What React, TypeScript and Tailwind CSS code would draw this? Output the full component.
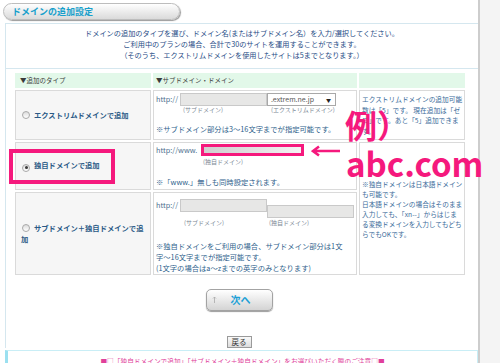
import React from "react";

const jp = "font-['Noto_Sans_CJK_JP','Noto_Sans',sans-serif]";

const Radio = ({ checked }: { checked?: boolean }) => (
  <span className="mr-[4px] inline-flex h-[8px] w-[8px] items-center justify-center rounded-full border border-[#a9a9a9] bg-gradient-to-b from-[#dcdcdc] to-white align-[-1px]">
    {checked && <span className="h-[3px] w-[3px] rounded-full bg-[#3a3a3a]" />}
  </span>
);

const Field = ({ w }: { w: string }) => (
  <span className={`block h-[13px] border border-[#c9c9c9] bg-[#e7e7e6] ${w}`} />
);

const App = () => {
  return (
    <div className={`flex h-[363px] w-[500px] overflow-hidden bg-white ${jp}`}>
      <div className="relative w-[478px]">
        {/* title tab */}
        <div className="ml-[3px] mt-[3px] flex h-[17px] w-[177px] items-center rounded-full border border-[#bdbdbd] bg-gradient-to-b from-white to-[#dadada] pl-[8px] shadow-[1px_1px_1px_#9a9a9a]">
          <span className="text-[9px] font-bold leading-none text-[#169fcb]">ドメインの追加設定</span>
        </div>

        <div className="ml-[5px] mt-[3px] border-l border-t border-[#d5e7ef]">
          <div className="h-[45px] border-b border-[#d5e7ef] pt-[4px] text-center text-[7.2px] leading-[11px] text-[#1f4c86]">
            <p>ドメインの追加のタイプを選び、ドメイン名(またはサブドメイン名）を入力/選択してください。</p>
            <p>ご利用中のプランの場合、合計で30のサイトを運用することができます。</p>
            <p>（そのうち、エクストリムドメインを使用したサイトは5までとなります。）</p>
          </div>

          <table className="ml-[7px] mt-[2px] w-[454px] table-fixed border-separate border-spacing-[2px] text-[7.3px] text-[#2f5f8c]">
            <colgroup>
              <col className="w-[136px]" />
              <col className="w-[204px]" />
              <col className="w-[106px]" />
            </colgroup>
            <thead>
              <tr className="h-[15px]">
                <th className="bg-[#e2f8e9] pl-[5px] text-left text-[6.5px] font-normal text-[#3a3a3a]">▼追加のタイプ</th>
                <th className="bg-[#e2f8e9] pl-[3px] text-left text-[6.5px] font-normal text-[#3a3a3a]">▼サブドメイン・ドメイン</th>
                <th className="bg-[#e2f8e9]" />
              </tr>
            </thead>
            <tbody>
              <tr className="h-[50px]">
                <td className="border border-[#dadada] bg-[#f6f6f6] pl-[6px] align-middle font-bold text-[#2b5a86]">
                  <Radio />
                  エクストリムドメインで追加
                </td>
                <td className="border border-[#dadada] pl-[2px] pt-[2px] align-top">
                  <div className="flex items-center">
                    <span className="w-[24px] leading-[13px] text-[#4d6f8e]">http://</span>
                    <Field w="w-[87px]" />
                    <span className="flex h-[13px] w-[69px] items-center justify-between border border-[#a8a8a8] bg-white pl-[3px] pr-[4px] text-[7px] text-[#555]">
                      .extrem.ne.jp<span className="text-[5px] text-[#222]">▼</span>
                    </span>
                  </div>
                  <div className="flex text-[6px] leading-[8px] text-[#7b8794]">
                    <span className="ml-[27px] w-[88px]">(サブドメイン)</span>
                    <span>(エクストリムドメイン)</span>
                  </div>
                  <p className="mt-[10px] whitespace-nowrap leading-[11px]">※サブドメイン部分は3～16文字までが指定可能です。</p>
                </td>
                <td className="border border-[#dadada] pl-[2px] align-middle text-[6.7px] leading-[10.5px] text-[#3a6b9a]">
                  <p className="whitespace-nowrap">
                    エクストリムドメインの追加可能
                    <br />
                    数は「5」です。 現在追加は「ゼ
                    <br />
                    ロ」です。あと「5」追加できま
                    <br />
                    す。
                  </p>
                </td>
              </tr>

              <tr className="h-[48px]">
                <td className="border border-[#dadada] bg-[#f6f6f6] pl-[6px] align-middle font-bold text-[#2b5a86]">
                  <Radio checked />
                  独自ドメインで追加
                </td>
                <td className="border border-[#dadada] pl-[2px] pt-[1px] align-top">
                  <div className="flex items-center">
                    <span className="w-[45px] leading-[12px] text-[#4d6f8e]">http://www.</span>
                    <span className="block h-[12px] w-[103px] border-[3px] border-[#f5197d] bg-gradient-to-r from-[#cfcfcf] to-[#f3f3f3]" />
                  </div>
                  <p className="ml-[47px] mt-[2px] text-[6px] leading-[8px] text-[#7b8794]">(独自ドメイン)</p>
                  <p className="mt-[11px] whitespace-nowrap leading-[11px]">※「www.」無しも同時設定されます。</p>
                </td>
                <td rowSpan={2} className="border border-[#dadada] pl-[2px] align-middle text-[6.7px] leading-[10px] text-[#3a6b9a]">
                  <p className="whitespace-nowrap">
                    ※独自ドメインは日本語ドメイン
                    <br />
                    も可能です。
                    <br />
                    日本語ドメインの場合はそのまま
                    <br />
                    入力しても、「xn--」からはじま
                    <br />
                    る変換ドメインを入力してもどち
                    <br />
                    らでもOKです。
                  </p>
                </td>
              </tr>

              <tr className="h-[82px]">
                <td className="border border-[#dadada] bg-[#f6f6f6] pl-[5px] align-middle font-bold leading-[11px] text-[#2b5a86]">
                  <p className="whitespace-nowrap">
                    <span className="ml-[1px]">
                      <Radio />
                    </span>
                    サブドメイン＋独自ドメインで追
                    <br />加
                  </p>
                </td>
                <td className="border border-[#dadada] pl-[2px] pt-[6px] align-top">
                  <div className="flex items-start">
                    <span className="w-[24px] leading-[13px] text-[#4d6f8e]">http://</span>
                    <Field w="w-[87px]" />
                    <span className="mt-[6px]">
                      <Field w="w-[87px]" />
                    </span>
                  </div>
                  <div className="mt-[1px] flex text-[6px] leading-[8px] text-[#7b8794]">
                    <span className="ml-[28px] w-[85px]">(サブドメイン)</span>
                    <span>(独自ドメイン)</span>
                  </div>
                  <p className="mt-[14px] whitespace-nowrap leading-[11px]">
                    ※独自ドメインをご利用の場合、サブドメイン部分は1文
                    <br />
                    字～16文字までが指定可能です。
                    <br />
                    (1文字の場合はa～zまでの英字のみとなります)
                  </p>
                </td>
              </tr>
            </tbody>
          </table>

          <div className="mt-[12px] flex justify-center pr-[6px]">
            <button className="flex h-[22px] w-[67px] items-center rounded-[5px] border border-[#a3a3a3] bg-gradient-to-b from-white to-[#d4d4d4] pl-[5px] shadow-[0_1px_1px_#9c9c9c]">
              <svg width="5" height="8" viewBox="0 0 5 8" className="mr-[14px]">
                <path d="M2.5 1 V7 M1 2.5 L2.5 1 L4 2.5" stroke="#a8a8a8" strokeWidth="0.8" fill="none" />
              </svg>
              <span className="text-[10px] font-bold leading-none text-[#1a9fd6]">次へ</span>
            </button>
          </div>

          <div className="mt-[25px] flex justify-center pr-[6px]">
            <button className="flex h-[12px] w-[25px] items-center justify-center border border-[#9a9a9a] bg-gradient-to-b from-[#fafafa] to-[#dcdcdc] text-[7.5px] leading-none text-[#333]">
              戻る
            </button>
          </div>
        </div>

        <div className="ml-[5px] mt-[2px] h-[20px] border-l-[3px] border-r border-t border-[#c9eef6] border-l-[#9be0f0] pt-[6px] text-center text-[6.7px] leading-[9px] text-[#e0409a]">
          ■□「独自ドメインで追加」「サブドメイン＋独自ドメイン」をお選びいただく際のご注意□■
        </div>

        {/* annotations */}
        <div className="absolute left-[9px] top-[149px] h-[35px] w-[106px] border-[4px] border-[#f5197d]" />
        <svg className="absolute left-[311px] top-[145px]" width="30" height="12" viewBox="0 0 30 12">
          <path d="M29 6 H3 M8 1.5 L2 6 L8 10.5" stroke="#f5197d" strokeWidth="2.6" fill="none" />
        </svg>
        <span className="absolute left-[345px] top-[108px] whitespace-nowrap text-[32px] font-bold leading-none text-[#f5197d]">例）</span>
        <span className="absolute left-[346px] top-[147px] whitespace-nowrap text-[33px] font-bold leading-none text-[#f5197d]">abc.com</span>
      </div>
      <div className="flex-1 border-l-2 border-[#cdcdcd] bg-[#f4f4f4]" />
    </div>
  );
};

export default App;
